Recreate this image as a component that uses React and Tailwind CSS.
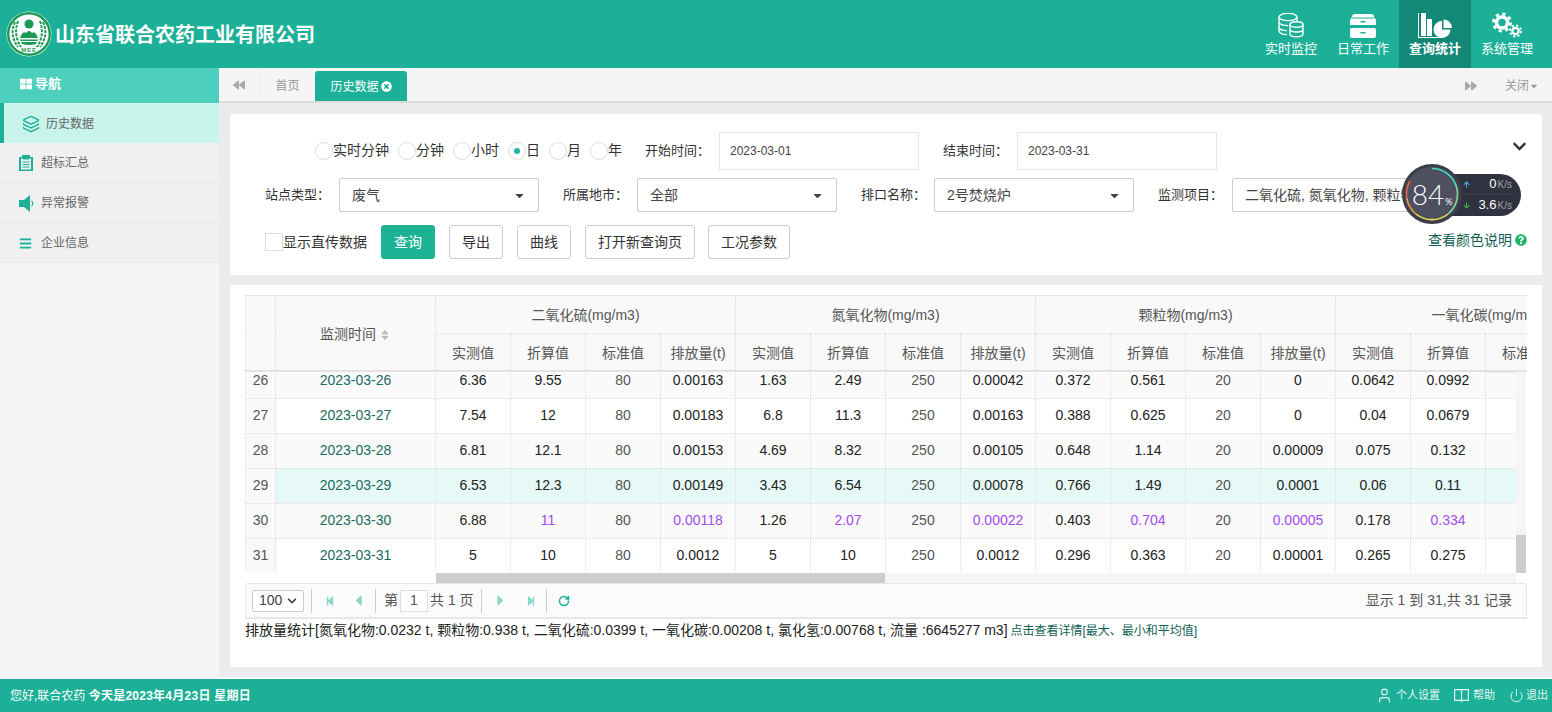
import { Layers, User, Power, RotateCw } from "lucide-react";
import {
  FaBackward,
  FaForward,
  FaThLarge,
  FaBars,
  FaTimesCircle,
  FaChevronDown,
  FaQuestionCircle,
  FaSort,
  FaStepBackward,
  FaStepForward,
  FaCaretLeft,
  FaCaretRight,
  FaCaretDown,
  FaArrowUp,
  FaArrowDown,
} from "react-icons/fa";

const P = (v) => ({ v, purple: true });

const rows = [
  ["26", "2023-03-26", "6.36", "9.55", "80", "0.00163", "1.63", "2.49", "250", "0.00042", "0.372", "0.561", "20", "0", "0.0642", "0.0992"],
  ["27", "2023-03-27", "7.54", "12", "80", "0.00183", "6.8", "11.3", "250", "0.00163", "0.388", "0.625", "20", "0", "0.04", "0.0679"],
  ["28", "2023-03-28", "6.81", "12.1", "80", "0.00153", "4.69", "8.32", "250", "0.00105", "0.648", "1.14", "20", "0.00009", "0.075", "0.132"],
  ["29", "2023-03-29", "6.53", "12.3", "80", "0.00149", "3.43", "6.54", "250", "0.00078", "0.766", "1.49", "20", "0.0001", "0.06", "0.11"],
  ["30", "2023-03-30", "6.88", P("11"), "80", P("0.00118"), "1.26", P("2.07"), "250", P("0.00022"), "0.403", P("0.704"), "20", P("0.00005"), "0.178", P("0.334")],
  ["31", "2023-03-31", "5", "10", "80", "0.0012", "5", "10", "250", "0.0012", "0.296", "0.363", "20", "0.00001", "0.265", "0.275"],
];

const groups = ["二氧化硫(mg/m3)", "氮氧化物(mg/m3)", "颗粒物(mg/m3)", "一氧化碳(mg/m3)"];
const subs = ["实测值", "折算值", "标准值", "排放量(t)"];

function Logo() {
  return (
    <svg width="46" height="46" viewBox="0 0 46 46">
      <circle cx="23" cy="23" r="22.500" fill="#fff" />
      <circle cx="23" cy="23" r="20.800" fill="none" stroke="#1b9a55" strokeWidth="2.400" />
      <path d="M9 11 Q3 24 12 36 M12 10 Q7 24 15 36 M37 11 Q43 24 34 36 M34 10 Q39 24 31 36" fill="none" stroke="#1b9a55" strokeWidth="2" strokeDasharray="3 1.200" />
      <circle cx="23" cy="13" r="4.500" fill="#1b9a55" />
      <path d="M14 27 Q17 19 20 22 Q23 18 26 22 Q29 19 32 27 Z" fill="#1b9a55" />
      <path d="M14 28.500 H32 L30 33 Q23 35 16 33 Z" fill="#1b9a55" />
      <path d="M15 30.500 H31" stroke="#fff" strokeWidth="1" />
      <text x="23" y="41" textAnchor="middle" fontSize="6" fontWeight="700" fill="#1b9a55" fontFamily="Liberation Sans" letterSpacing="0.8">MEE</text>
    </svg>
  );
}

function DbIcon() {
  return (
    <svg width="26" height="26" viewBox="0 0 26 26" fill="none" stroke="#fff" strokeWidth="1.400">
      <ellipse cx="10" cy="5" rx="9" ry="3.600" />
      <path d="M1 5v14c0 2 3.500 3.600 8 3.600M1 10c0 2 4 3.600 9 3.600M1 15c0 2 3 3.500 8 3.600M19 5v4" />
      <ellipse cx="18.500" cy="12.500" rx="6.500" ry="2.700" fill="#1cb098" />
      <path d="M12 12.500v9.500c0 1.500 3 2.700 6.500 2.700s6.500-1.200 6.500-2.700v-9.500M12 17.300c0 1.500 3 2.700 6.500 2.700s6.500-1.200 6.500-2.700" />
    </svg>
  );
}

function DrawerIcon() {
  return (
    <svg width="26" height="24" viewBox="0 0 26 24" fill="#fff">
      <path d="M5 0h16a3 3 0 0 1 3 3l2 3v5H0V6l2-3a3 3 0 0 1 3-3z" />
      <rect x="0" y="14" width="26" height="10" rx="2" />
      <rect x="10.500" y="7" width="5" height="1.500" fill="#1cb098" />
      <rect x="10.500" y="18" width="5" height="1.500" fill="#1cb098" />
      <rect x="2" y="3.500" width="22" height="1" fill="#1cb098" />
    </svg>
  );
}

function ChartIcon() {
  return (
    <svg width="34" height="25" viewBox="0 0 34 25" fill="#fff">
      <path d="M0 0h1v24h24v1H0z" />
      <rect x="3" y="0" width="5" height="23" />
      <rect x="9" y="6" width="5" height="17" />
      <path d="M24 7.500v8.500h8.500A8.500 8.500 0 1 1 24 7.500z" transform="translate(0 0.500)" />
      <path d="M25.500 6.500a8.500 8.500 0 0 1 8.500 8.500h-8.500z" />
    </svg>
  );
}

function GearsIcon() {
  return (
    <svg width="32" height="26" viewBox="0 0 32 26" fill="none" stroke="#fff">
      <circle cx="11" cy="10.500" r="5.500" strokeWidth="3.500" />
      <circle cx="11" cy="10.500" r="8.500" strokeWidth="3" strokeDasharray="3.300 3.370" />
      <circle cx="24.500" cy="19" r="3.200" strokeWidth="2.200" />
      <circle cx="24.500" cy="19" r="5.500" strokeWidth="2" strokeDasharray="2.100 2.220" />
    </svg>
  );
}

function ClipIcon() {
  return (
    <svg width="14" height="16" viewBox="0 0 14 16">
      <path d="M0 2h3V0h8v2h3v14H0z" fill="#1cb098" />
      <path d="M2 3.500h10v11H2z" fill="#f0f0f0" />
      <path d="M4 1.500h6V4H4zM3.500 7h7M3.500 9.500h7M3.500 12h7" fill="#1cb098" stroke="#1cb098" strokeWidth="1" />
    </svg>
  );
}

function SpeakerIcon() {
  return (
    <svg width="15" height="17" viewBox="0 0 15 17" fill="#1cb098">
      <path d="M0 5h5l6-5v17l-6-5H0z" />
      <path d="M12.500 6a3 3 0 0 1 0 5" fill="none" stroke="#1cb098" strokeWidth="1.200" />
    </svg>
  );
}

function BookIcon() {
  return (
    <svg width="15" height="13" viewBox="0 0 15 13" fill="none" stroke="#e4f7f3" strokeWidth="1.200">
      <path d="M.6.6h13.800v10.800H8.500L7.500 12.400l-1-1H.6zM7.500 1v10" />
    </svg>
  );
}

function Gauge() {
  return (
    <div className="absolute left-[1172px] top-[50px] h-[62px] w-[120px]">
      {/* speed pill */}
      <div className="absolute left-[29px] top-[10px] flex h-[42px] w-[90px] flex-col rounded-r-[21px] bg-[#30323f] pl-[32px] pr-[9px] text-white">
        <div className="flex h-[21px] items-center justify-between border-b border-[#3d3f4d]">
          <FaArrowUp className="text-[7px] text-[#45b3ef]" />
          <span className="text-[13px] leading-[16px]">
            0<span className="ml-[1px] text-[10px] text-[#a0a3ad]">K/s</span>
          </span>
        </div>
        <div className="flex h-[21px] items-center justify-between">
          <FaArrowDown className="text-[7px] text-[#3cb54a]" />
          <span className="text-[13px] leading-[16px]">
            3.6<span className="ml-[1px] text-[10px] text-[#a0a3ad]">K/s</span>
          </span>
        </div>
      </div>
      {/* ring */}
      <div className="absolute left-0 top-0 flex h-[60px] w-[60px] items-center justify-center rounded-full border-[3px] border-[#3c3e4c] bg-[#4e5060]">
        <svg className="absolute left-[-3px] top-[-3px]" width="60" height="60" viewBox="0 0 60 60" fill="none" strokeWidth="1.600">
          <path d="M30 4.500A25.500 25.500 0 0 1 54.500 23" stroke="#3fdcc6" />
          <path d="M54.500 23A25.500 25.500 0 0 1 46 50" stroke="#7fdc8c" />
          <path d="M46 50A25.500 25.500 0 0 1 14 50" stroke="#e8dc4e" />
          <path d="M14 50A25.500 25.500 0 0 1 4.800 34" stroke="#f0a53c" />
          <path d="M4.800 34A25.500 25.500 0 0 1 8 17" stroke="#ef5f4a" />
        </svg>
        <span className="relative font-[Lato,sans-serif] text-[28px] font-light leading-none text-white">
          84<span className="ml-[1px] text-[9px] font-normal">%</span>
        </span>
      </div>
    </div>
  );
}

function Radio({ label, checked }) {
  return (
    <label className="flex items-center">
      <span className="flex h-[18px] w-[18px] items-center justify-center rounded-full border border-[#ddd] bg-white">
        {checked && <span className="h-[6px] w-[6px] rounded-full bg-[#1cb5a8]" />}
      </span>
      <span className="pb-[2px] text-[14px] leading-[18px] text-[#333]">{label}</span>
    </label>
  );
}

function Label({ children, className }) {
  return <span className={`text-[13px] text-[#333] ${className}`}>{children}</span>;
}

function DateBox({ value }) {
  return (
    <div className="flex h-[38px] w-[200px] items-center border border-[#e5e6e7] px-[10px] text-[12px] text-[#444]">
      {value}
    </div>
  );
}

function Select({ value }) {
  return (
    <div className="flex h-[34px] w-[200px] items-center justify-between overflow-hidden rounded-[2px] border border-[#ccc] bg-white px-[12px] text-[14px] text-[#444]">
      <span className="overflow-hidden whitespace-nowrap">{value}</span>
      <FaCaretDown className="shrink-0 text-[13px] text-[#444]" />
    </div>
  );
}

function Btn({ children, className, primary }) {
  const tone = primary ? "border-[#1cb394] bg-[#1cb394] text-white" : "border-[#ccc] bg-white text-[#333]";
  return (
    <button className={`flex h-[34px] items-center justify-center rounded-[3px] border text-[14px] ${tone} ${className}`}>
      {children}
    </button>
  );
}

function Cols() {
  return (
    <colgroup>
      <col className="w-[30px]" />
      <col className="w-[160px]" />
      {Array.from({ length: 16 }).map((_, i) => (
        <col key={i} className="w-[75px]" />
      ))}
    </colgroup>
  );
}

function DataTable() {
  return (
    <div className="w-[1282px]">
      <div className="overflow-hidden border-t border-[#e7e7e7]">
        <table className="w-[1390px] table-fixed border-collapse bg-[#f9f9f9] text-[14px] text-[#555]">
          <Cols />
          <thead>
            <tr className="h-[37px]">
              <th rowSpan={2} className="border-x border-dotted border-[#ddd] font-normal" />
              <th rowSpan={2} className="border-r border-dotted border-[#ddd] pt-[2px] font-normal">
                监测时间
                <FaSort className="ml-[3px] inline text-[12px] text-[#bbb]" />
              </th>
              {groups.map((g) => (
                <th key={g} colSpan={4} className="border-r border-b border-dotted border-[#ddd] pt-[2px] font-normal">
                  {g}
                </th>
              ))}
            </tr>
            <tr className="h-[37px]">
              {groups.flatMap((g) =>
                subs.map((s) => (
                  <th key={g + s} className="border-r border-dotted border-[#ddd] pt-[4px] font-normal">
                    {s}
                  </th>
                )),
              )}
            </tr>
          </thead>
        </table>
      </div>
      <div className="flex border-t-2 border-[#e2e2e2]">
        <div className="h-[201px] w-[1271px] overflow-hidden">
          <table className="w-[1390px] table-fixed border-collapse text-[14px] text-[#222]">
            <Cols />
            <tbody>
              {rows.map((r, i) => {
                const stripe = r[0] === "29" ? "bg-[#e6f9f6]" : i % 2 === 0 ? "bg-[#fafafa]" : "bg-white";
                const first = i === 0;
                const edge = first ? "border-t-0 pb-[10px] leading-[15px]" : "leading-[17px]";
                return (
                  <tr key={r[0]} className={`${first ? "h-[25px]" : "h-[35px]"} ${stripe}`}>
                    <td className={`border border-dotted border-[#ddd] bg-[#f9f9f9] text-center text-[#555] ${edge}`}>
                      {r[0]}
                    </td>
                    <td className={`border border-dotted border-[#ddd] text-center text-[#1b6a62] ${edge}`}>{r[1]}</td>
                    {r.slice(2).map((c, j) => {
                      const purple = typeof c === "object";
                      const std = j % 4 === 2;
                      return (
                        <td
                          key={j}
                          className={`border border-dotted border-[#ddd] text-center ${purple ? "text-[#a24bf0]" : std ? "text-[#555]" : ""} ${edge}`}
                        >
                          {purple ? c.v : c}
                        </td>
                      );
                    })}
                    <td className="border border-dotted border-[#ddd]" />
                    <td className="border border-dotted border-[#ddd]" />
                  </tr>
                );
              })}
            </tbody>
          </table>
        </div>
        {/* vertical scrollbar */}
        <div className="flex h-[201px] w-[10px] flex-col justify-end bg-[#f5f5f5]">
          <div className="h-[38px] bg-[#cdcdcd]" />
        </div>
      </div>
      {/* horizontal scrollbar */}
      <div className="flex h-[10px] w-[1271px] bg-[#f5f5f5]">
        <div className="w-[191px] bg-white" />
        <div className="w-[449px] bg-[#cdcdcd]" />
      </div>
    </div>
  );
}

function Pager() {
  return (
    <div className="flex h-[36px] w-[1282px] items-center justify-between rounded-t-[3px] border border-b-[2px] border-[#e7e7e7] bg-[#fbfbfb] pl-[6px] pr-[14px] text-[14px] text-[#555]">
      <div className="flex items-center">
        <div className="flex h-[22px] w-[52px] items-center justify-between rounded-[2px] border border-[#ccc] bg-white px-[6px] text-[14px] text-[#444]">
          100
          <FaChevronDown className="text-[10px] text-[#444]" />
        </div>
        <div className="ml-[7px] h-[24px] border-l border-[#ccc]" />
        <FaStepBackward className="ml-[13px] text-[10px] text-[#8ad6c9]" />
        <FaCaretLeft className="ml-[15px] text-[17px] text-[#8ad6c9]" />
        <div className="ml-[8px] h-[24px] border-l border-[#ccc]" />
        <span className="ml-[8px]">第</span>
        <div className="ml-[2px] flex h-[22px] w-[28px] items-center justify-center border border-[#ddd] bg-white">1</div>
        <span className="ml-[2px]">共 1 页</span>
        <div className="ml-[7px] h-[24px] border-l border-[#ccc]" />
        <FaCaretRight className="ml-[10px] text-[17px] text-[#8ad6c9]" />
        <FaStepForward className="ml-[17px] text-[10px] text-[#8ad6c9]" />
        <div className="ml-[10px] h-[24px] border-l border-[#ccc]" />
        <RotateCw className="ml-[11px] h-[12px] w-[12px] text-[#1cb098]" strokeWidth={3} />
      </div>
      <span>显示 1 到 31,共 31 记录</span>
    </div>
  );
}

function NavItem({ icon, label, active }) {
  return (
    <div className={`flex h-[72px] w-[72px] flex-col items-center text-[13px] text-white ${active ? "bg-[#148877] font-bold" : ""}`}>
      <div className="flex h-[39px] w-full items-end justify-center pb-[1px]">{icon}</div>
      <span>{label}</span>
    </div>
  );
}

function SideItem({ icon, label }) {
  return (
    <div className="flex h-[40px] items-center border-b border-[#e8e8e8] bg-[#f0f0f0] pl-[19px] pt-[1px] text-[12px] text-[#666]">
      <span className="flex w-[22px] items-center">{icon}</span>
      {label}
    </div>
  );
}

export default function App() {
  return (
    <div className="flex h-[712px] w-[1552px] flex-col overflow-hidden bg-[#f5f5f5] font-[Liberation_Sans,Noto_Sans_CJK_SC,sans-serif]">
      {/* Header */}
      <header className="flex h-[68px] shrink-0 items-start justify-between bg-[#1cb098] pr-[9px]">
        <div className="flex h-[68px] items-center pl-[6px]">
          <Logo />
          <h1 className="ml-[3px] mt-[2px] text-[20px] font-bold text-white">山东省联合农药工业有限公司</h1>
        </div>
        <nav className="flex h-[68px] overflow-hidden">
          <NavItem icon={<DbIcon />} label="实时监控" />
          <NavItem icon={<DrawerIcon />} label="日常工作" />
          <NavItem icon={<ChartIcon />} label="查询统计" active />
          <NavItem icon={<GearsIcon />} label="系统管理" />
        </nav>
      </header>

      <div className="flex min-h-0 flex-1">
        {/* Sidebar */}
        <aside className="w-[219px] shrink-0 bg-[#f5f5f5]">
          <div className="flex h-[35px] items-center bg-[#4ccfbc] pb-[3px] pl-[20px] text-[13px] font-bold text-white">
            <FaThLarge className="mr-[3px] text-[12px]" />
            导航
          </div>
          <div className="flex h-[40px] items-center border-l-4 border-[#1cb098] bg-[#c8f4ec] pl-[18px] pt-[1px] text-[12px] text-[#666]">
            <Layers className="mr-[6px] h-[18px] w-[18px] text-[#1cb098]" strokeWidth={1.8} />
            历史数据
          </div>
          <SideItem icon={<ClipIcon />} label="超标汇总" />
          <SideItem icon={<SpeakerIcon />} label="异常报警" />
          <SideItem icon={<FaBars className="text-[13px] text-[#1cb098]" />} label="企业信息" />
        </aside>

        {/* Main */}
        <main className="flex min-w-0 flex-1 flex-col border-b-2 border-white bg-[#ebebed]">
          {/* Tabs */}
          <div className="flex h-[35px] shrink-0 items-end justify-between border-b-[2px] border-[#dcdcdc] bg-[#f5f5f5] text-[12px]">
            <div className="flex h-[33px] items-end">
              <div className="flex h-[33px] w-[41px] items-center justify-center border-r border-[#eee] text-[#aaa]">
                <FaBackward className="text-[12px]" />
              </div>
              <div className="flex h-[33px] w-[55px] items-center justify-center pt-[3px] text-[#999]">首页</div>
              <div className="flex h-[30px] w-[92px] items-center justify-center rounded-t-[3px] bg-[#1cb098] pt-[1px] text-white">
                历史数据
                <FaTimesCircle className="ml-[2px] text-[11px]" />
              </div>
            </div>
            <div className="flex h-[33px] items-center pr-[13px] pt-[3px] text-[#999]">
              <FaForward className="mr-[28px] text-[12px] text-[#aaa]" />
              关闭
              <FaCaretDown className="text-[10px]" />
            </div>
          </div>

          {/* Filter */}
          <section className="relative ml-[11px] mr-[10px] mt-[11px] h-[161px] shrink-0 rounded-t-[3px] bg-white pt-[18px]">
            <div className="flex h-[38px] items-center">
              <div className="ml-[85px] flex w-[330px] gap-[9px]">
                <Radio label="实时分钟" />
                <Radio label="分钟" />
                <Radio label="小时" />
                <Radio label="日" checked />
                <Radio label="月" />
                <Radio label="年" />
              </div>
              <Label className="w-[74px]">开始时间：</Label>
              <DateBox value="2023-03-01" />
              <Label className="ml-[24px] w-[74px]">结束时间：</Label>
              <DateBox value="2023-03-31" />
            </div>
            <FaChevronDown className="absolute right-[15px] top-[25px] text-[15px] text-[#333]" />
            <div className="mt-[8px] flex h-[34px] items-center pl-[35px]">
              <Label className="w-[74px]">站点类型：</Label>
              <Select value="废气" />
              <Label className="ml-[24px] w-[74px]">所属地市：</Label>
              <Select value="全部" />
              <Label className="ml-[24px] w-[73px]">排口名称：</Label>
              <Select value="2号焚烧炉" />
              <Label className="ml-[24px] w-[74px]">监测项目：</Label>
              <Select value="二氧化硫, 氮氧化物, 颗粒物, 一氧化碳" />
            </div>
            <div className="mt-[13px] flex h-[34px] items-center pl-[35px]">
              <span className="h-[18px] w-[18px] border border-[#ddd] bg-white" />
              <span className="w-[98px] text-[14px] text-[#333]">显示直传数据</span>
              <Btn primary className="w-[54px]">查询</Btn>
              <Btn className="ml-[14px] w-[54px]">导出</Btn>
              <Btn className="ml-[14px] w-[54px]">曲线</Btn>
              <Btn className="ml-[14px] w-[110px]">打开新查询页</Btn>
              <Btn className="ml-[13px] w-[82px]">工况参数</Btn>
              <span className="mb-[4px] ml-auto mr-[15px] flex items-center text-[14px] leading-[16px] text-[#0f5f55]">
                查看颜色说明
                <FaQuestionCircle className="ml-[3px] text-[12px] text-[#1cb36a]" />
              </span>
            </div>
            <Gauge />
          </section>

          {/* Table panel */}
          <section className="ml-[11px] mr-[10px] mt-[10px] h-[382px] shrink-0 bg-white pl-[15px] pt-[10px]">
            <DataTable />
            <Pager />
            <p className="mt-[1px] text-[14px] text-[#222]">
              排放量统计[氮氧化物:0.0232 t, 颗粒物:0.938 t, 二氧化硫:0.0399 t, 一氧化碳:0.00208 t, 氯化氢:0.00768 t, 流量 :6645277 m3]
              <span className="ml-[3px] text-[12px] text-[#0f5f55]">点击查看详情[最大、最小和平均值]</span>
            </p>
          </section>
        </main>
      </div>

      {/* Footer */}
      <footer className="flex h-[33px] shrink-0 items-center justify-between bg-[#1cb098] pl-[10px] pr-[4px] text-[12px] text-white">
        <span>
          您好,联合农药 <b className="tracking-[0.25px]">今天是2023年4月23日 星期日</b>
        </span>
        <div className="flex items-center text-[11px] text-[#e4f7f3]">
          <User className="mr-[3px] h-[17px] w-[17px]" strokeWidth={1.5} />
          个人设置
          <span className="ml-[14px] mr-[4px]">
            <BookIcon />
          </span>
          帮助
          <Power className="ml-[14px] mr-[2px] h-[15px] w-[15px]" strokeWidth={1.5} />
          退出
        </div>
      </footer>
    </div>
  );
}
